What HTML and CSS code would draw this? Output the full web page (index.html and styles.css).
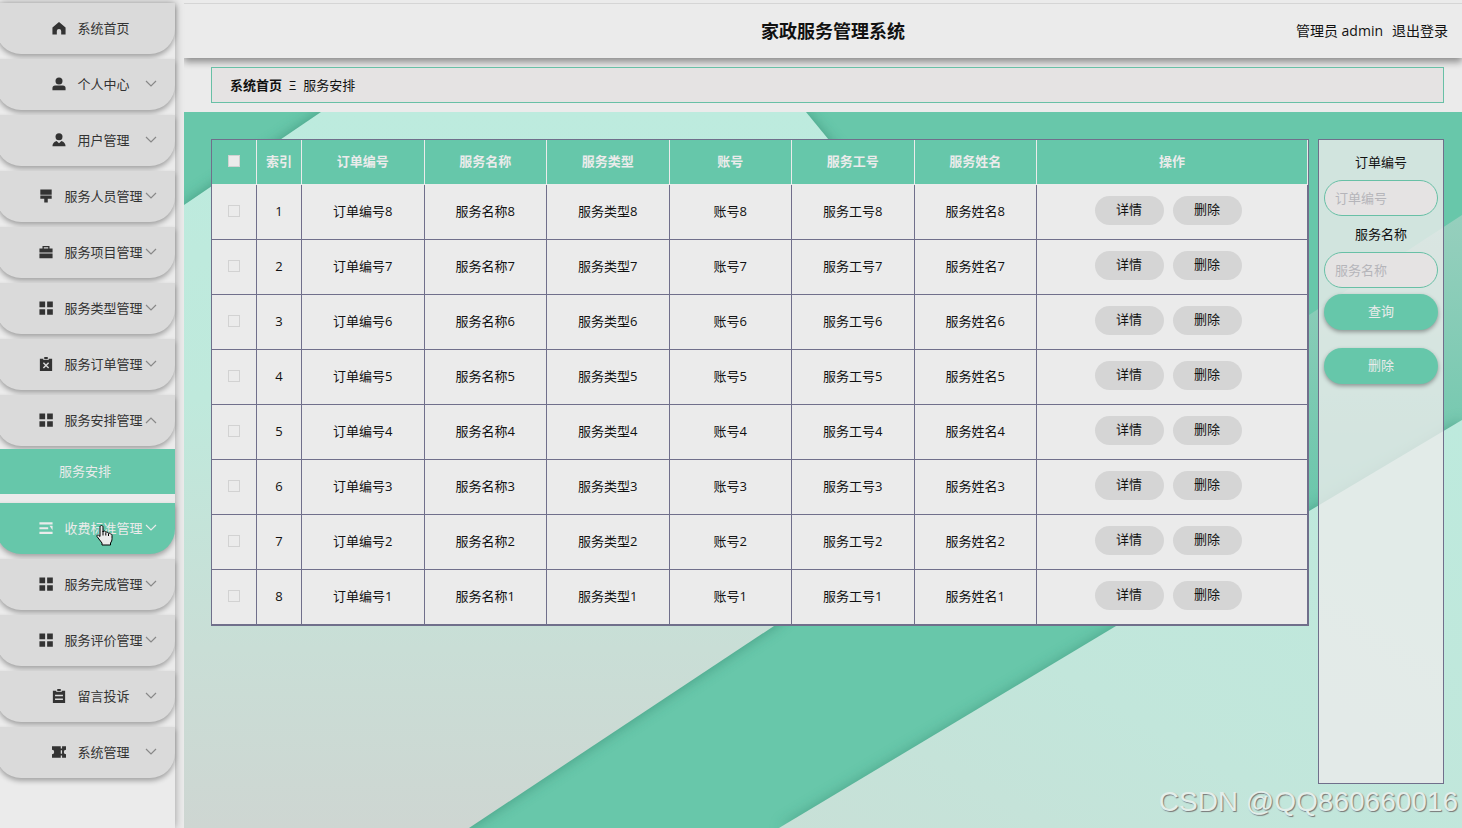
FILE: index.html
```html
<!DOCTYPE html>
<html lang="zh-CN">
<head>
  <meta charset="UTF-8" />
  <meta name="viewport" content="width=device-width, initial-scale=1">
  <title>家政服务管理系统</title>
  <link rel="stylesheet" href="styles.css">
</head>
<body>

  <!-- shared icons -->
  <svg class="sprite" aria-hidden="true">
    <symbol id="i-home" viewBox="0 0 16 16"><path d="M8 1L15.500 7.500v8h-5v-4a2.500 2.500 0 0 0-5 0v4h-5v-8z"/></symbol>
    <symbol id="i-user" viewBox="0 0 16 16"><circle cx="8" cy="4.500" r="4"/><path d="M.5 15V12.500c0-1.800 1.200-2.800 3-2.800h9c1.800 0 3 1 3 2.800V15z"/></symbol>
    <symbol id="i-admin" viewBox="0 0 16 16"><circle cx="8" cy="4.300" r="4"/><path d="M.5 15c0-3 1.700-5.200 4.800-6L8 11.800 10.700 9c3.100.8 4.800 3 4.800 6z"/></symbol>
    <symbol id="i-brush" viewBox="0 0 16 16"><path d="M1.500.5h13v6h-13zM1.500 7.500h13V11H10v4.500H6V11H1.500z"/></symbol>
    <symbol id="i-case" viewBox="0 0 16 16"><path d="M4 4V1h8v3h3.500v4.500H.5V4zM5.500 4h5V2.500h-5zM.5 9.700h15V15H.5z" fill-rule="evenodd"/></symbol>
    <symbol id="i-grid" viewBox="0 0 16 16"><path d="M.5.5h6.500v6.500H.5zM9.300.5h6.500v6.500H9.300zM.5 9.300h6.500v6.500H.5zM9.300 9.300h6.500v6.500H9.300z"/></symbol>
    <symbol id="i-close" viewBox="0 0 16 16"><path d="M1 2h4v1.500h6V2h4v14H1zM6 0h4v2.500H6z"/><path d="M5 6.500l6 6m0-6l-6 6" fill="none" stroke="#dadada" stroke-width="1.700"/></symbol>
    <symbol id="i-lines" viewBox="0 0 16 16"><path d="M.5 1.500h15V4H.5zM.5 7h10v2.300H.5zM.5 12.300h15v2.500H.5zM12 5.500h3.500v5z"/></symbol>
    <symbol id="i-note" viewBox="0 0 16 16"><path d="M1 2h4v1.500h6V2h4v14H1zM6 0h4v2.500H6z"/><path d="M3.500 7.500h9M3.500 11.800h9" fill="none" stroke="#dadada" stroke-width="1.700"/></symbol>
    <symbol id="i-ticket" viewBox="0 0 16 16"><path d="M0 1.500h10v2.500h1.500V1.500H16v4a2.500 2.500 0 0 0 0 5v4h-4.500V12H10v2.500H0v-4a2.500 2.500 0 0 0 0-5zM10 6v4h1.500V6z" fill-rule="evenodd"/></symbol>
    <symbol id="i-arrow" viewBox="0 0 12 12"><path d="M1 3l5 5 5-5" fill="none" stroke="currentColor" stroke-width="1.200"/></symbol>
  </svg>

  <div class="app">
    <nav class="sidebar">
      <a href="#" class="item"><svg class="icon"><use href="#i-home"/></svg><span>系统首页</span></a>
      <a href="#" class="item"><svg class="icon"><use href="#i-user"/></svg><span>个人中心</span><svg class="arrow"><use href="#i-arrow"/></svg></a>
      <a href="#" class="item"><svg class="icon"><use href="#i-admin"/></svg><span>用户管理</span><svg class="arrow"><use href="#i-arrow"/></svg></a>
      <a href="#" class="item"><svg class="icon"><use href="#i-brush"/></svg><span>服务人员管理</span><svg class="arrow"><use href="#i-arrow"/></svg></a>
      <a href="#" class="item"><svg class="icon"><use href="#i-case"/></svg><span>服务项目管理</span><svg class="arrow"><use href="#i-arrow"/></svg></a>
      <a href="#" class="item"><svg class="icon"><use href="#i-grid"/></svg><span>服务类型管理</span><svg class="arrow"><use href="#i-arrow"/></svg></a>
      <a href="#" class="item"><svg class="icon"><use href="#i-close"/></svg><span>服务订单管理</span><svg class="arrow"><use href="#i-arrow"/></svg></a>
      <a href="#" class="item open"><svg class="icon"><use href="#i-grid"/></svg><span>服务安排管理</span><svg class="arrow"><use href="#i-arrow"/></svg></a>
      <a href="#" class="subitem">服务安排</a>
      <a href="#" class="item active"><svg class="icon"><use href="#i-lines"/></svg><span>收费标准管理</span><svg class="arrow"><use href="#i-arrow"/></svg>
        <svg class="pointer" viewBox="0 0 17 22"><path d="M5.500 1.500c1 0 1.500.7 1.500 1.500v5l.5-.8c1-.4 2 0 2.300 1 1-.5 2 0 2.400 1 1-.4 1.800 0 2.300.8 1-.1 1.500.5 1.500 1.500v3c0 2-.5 3-1.500 4.500v2H6v-2L1 12.500c-.6-1 .6-2 1.600-1.300L4 12.500V3c0-.8.500-1.500 1.500-1.500z" fill="#ebebeb" stroke="#000"/><path d="M7 7v4.500M9.800 8.500v3M12.500 9.500v2.500" stroke="#000"/></svg>
      </a>
      <a href="#" class="item"><svg class="icon"><use href="#i-grid"/></svg><span>服务完成管理</span><svg class="arrow"><use href="#i-arrow"/></svg></a>
      <a href="#" class="item"><svg class="icon"><use href="#i-grid"/></svg><span>服务评价管理</span><svg class="arrow"><use href="#i-arrow"/></svg></a>
      <a href="#" class="item"><svg class="icon"><use href="#i-note"/></svg><span>留言投诉</span><svg class="arrow"><use href="#i-arrow"/></svg></a>
      <a href="#" class="item"><svg class="icon"><use href="#i-ticket"/></svg><span>系统管理</span><svg class="arrow"><use href="#i-arrow"/></svg></a>
    </nav>

    <div class="main">
      <header class="header">
        <h1>家政服务管理系统</h1>
        <div class="account">
          <span>管理员 admin</span>
          <a href="#">退出登录</a>
        </div>
      </header>

      <div class="breadcrumb">
        <a href="#">系统首页</a>
        <span>Ξ</span>
        <span>服务安排</span>
      </div>

      <div class="content">
        <svg class="backdrop" viewBox="0 0 1278 716" preserveAspectRatio="none" aria-hidden="true">
          <defs>
            <linearGradient id="left" x1="0" y1="0" x2="0" y2="1">
              <stop offset="0" stop-color="#bdebde"/>
              <stop offset=".4" stop-color="#bfe9dc"/>
              <stop offset=".75" stop-color="#c9ded6"/>
              <stop offset="1" stop-color="#ced6d2"/>
            </linearGradient>
            <linearGradient id="right" x1="1" y1="0" x2="0" y2="1">
              <stop offset="0" stop-color="#bdeadd"/>
              <stop offset=".6" stop-color="#c2e6db"/>
              <stop offset="1" stop-color="#c8e0d7"/>
            </linearGradient>
            <linearGradient id="band" x1="0" y1="0" x2="0" y2="1">
              <stop offset="0" stop-color="#96cfbd"/>
              <stop offset="1" stop-color="#68c6aa"/>
            </linearGradient>
            <filter id="soft" x="-10%" y="-10%" width="120%" height="120%"><feGaussianBlur stdDeviation="7"/></filter>
          </defs>
          <rect width="1278" height="716" fill="#68c7aa"/>
          <path d="M137 0H622L860 290L590 514L285 716H0V93z" fill="#2f7f67" opacity=".6" filter="url(#soft)"/>
          <path d="M137 0H622L860 290L590 514L285 716H0V93z" fill="url(#left)"/>
          <path d="M1278 103L1125 203V420L1278 318z" fill="url(#band)"/>
          <path d="M1278 308L932 514L595 716H1278z" fill="#2f7f67" opacity=".5" filter="url(#soft)"/>
          <path d="M1278 308L932 514L595 716H1278z" fill="url(#right)"/>
        </svg>

        <table class="list">
          <thead>
            <tr>
              <th class="narrow"><input type="checkbox" aria-label="全选"></th>
              <th class="narrow">索引</th>
              <th>订单编号</th>
              <th>服务名称</th>
              <th>服务类型</th>
              <th>账号</th>
              <th>服务工号</th>
              <th>服务姓名</th>
              <th class="wide">操作</th>
            </tr>
          </thead>
          <tbody id="rows"></tbody>
        </table>

        <form class="search">
          <label for="orderNo">订单编号</label>
          <input type="text" id="orderNo" placeholder="订单编号">
          <label for="serviceName">服务名称</label>
          <input type="text" id="serviceName" placeholder="服务名称">
          <button type="button">查询</button>
          <button type="button">删除</button>
        </form>
      </div>
    </div>
  </div>

  <div class="watermark">CSDN @QQ860660016</div>

  <script>
    const rows = document.getElementById("rows");
    const fields = ["订单编号", "服务名称", "服务类型", "账号", "服务工号", "服务姓名"];

    for (let i = 1; i <= 8; i++) {
      const n = 9 - i;
      const cells = fields.map(name => `<td>${name}${n}</td>`).join("");
      rows.innerHTML += `<tr>
        <td><input type="checkbox" aria-label="选择第${i}行"></td>
        <td>${i}</td>${cells}
        <td><div class="actions"><button type="button">详情</button><button type="button">删除</button></div></td>
      </tr>`;
    }
  </script>

</body>
</html>
```
FILE: styles.css
```css
* {
  box-sizing: border-box;
}

body {
  margin: 0;
  background: #ebebeb;
  color: #111;
  font-family: 'Open Sans', 'Noto Sans CJK SC', sans-serif;
  font-size: 13px;
  line-height: 20px;
}

a {
  color: inherit;
  text-decoration: none;
}

button, input {
  font: inherit;
}

.sprite {
  display: none;
}

.app {
  display: flex;
  gap: 9px;
  min-height: 100vh;
  padding-top: 3px;
  overflow: hidden;
}

/* sidebar */
.sidebar {
  flex: 0 0 175px;
  box-shadow: 0 0 8px rgba(0, 0, 0, 0.35);
}

.item {
  position: relative;
  display: flex;
  align-items: center;
  justify-content: center;
  gap: 11px;
  height: 51px;
  margin-bottom: 5px;
  margin-left: -4px;
  padding: 0 14px 1px 25px;
  background: #dadada;
  color: #333;
  border-radius: 0 0 25px 25px;
  box-shadow: 0 3px 5px rgba(0, 0, 0, 0.3);
}

.item .icon {
  width: 14px;
  height: 14px;
  fill: currentColor;
}

.item .arrow {
  position: absolute;
  right: 18px;
  width: 12px;
  height: 12px;
  color: #888;
}

.item.open {
  margin-bottom: 3px;
}

.item.open .arrow {
  transform: rotate(180deg);
}

.item.active,
.subitem {
  background: #66c7aa;
  color: #ebebeb;
}

.item.active .arrow {
  color: #ebebeb;
}

.subitem {
  position: relative;
  display: block;
  padding-right: 5px;
  margin-bottom: 9px;
  line-height: 45px;
  text-align: center;
}

.pointer {
  position: absolute;
  left: 100px;
  top: 21px;
  width: 17px;
  height: 22px;
}

/* main area */
.main {
  flex: 1;
  min-width: 0;
  display: flex;
  flex-direction: column;
  overflow: hidden;
}

.header {
  display: grid;
  grid-template-columns: 1fr auto 1fr;
  align-items: center;
  height: 55px;
  padding: 0 14px;
  border-top: 1px solid #d5d5d5;
  box-shadow: 0 4px 7px rgba(0, 0, 0, 0.4);
}

.header h1 {
  grid-column: 2;
  margin: 0 0 0 20px;
  font-size: 18px;
}

.account {
  display: flex;
  justify-content: flex-end;
  gap: 9px;
  font-size: 14px;
}

.breadcrumb {
  display: flex;
  align-items: center;
  gap: 7px;
  height: 36px;
  margin: 9px 18px 9px 27px;
  padding: 0 18px;
  background: #e5e3e3;
  border: 1px solid #68c0a6;
}

.breadcrumb a {
  font-weight: bold;
}

.content {
  position: relative;
  flex: 1;
  display: flex;
  align-items: flex-start;
  gap: 9px;
  padding: 27px 18px 44px 27px;
}

.backdrop {
  position: absolute;
  inset: 0;
  width: 100%;
  height: 100%;
}

/* table */
.list {
  position: relative;
  flex: 1;
  width: 100%;
  min-width: 0;
  table-layout: fixed;
  border-spacing: 0;
  background: #ebebeb;
  border: 1px solid #706f8b;
  text-align: center;
}

.list th,
.list td {
  padding: 0 0 2px;
  border-right: 1px solid #706f8b;
}

.list th {
  height: 45px;
  background: #66c7aa;
  border-color: #ebebeb;
  border-bottom: 1px solid #ebebeb;
  color: #ebebeb;
}

.list td {
  height: 55px;
  border-bottom: 1px solid #706f8b;
}

.list .narrow {
  width: 45px;
}

.list .wide {
  width: 271px;
}

.list input {
  appearance: none;
  display: block;
  width: 12px;
  height: 12px;
  margin: 0 auto;
  background: #ebebeb;
  border: 1px solid #d2d2d2;
}

.actions {
  display: flex;
  justify-content: center;
  gap: 9px;
  padding: 0 8px 2px 0;
}

.actions button {
  width: 69px;
  height: 29px;
  padding: 0 0 2px;
  background: #d5d5d5;
  border: none;
  border-radius: 15px;
  color: #111;
  cursor: pointer;
}

/* search panel */
.search {
  position: relative;
  align-self: stretch;
  flex: 0 0 126px;
  display: flex;
  flex-direction: column;
  padding: 4px 5px;
  background: rgba(235, 235, 235, 0.8);
  border: 1px solid #706f8b;
  text-align: center;
}

.search label {
  line-height: 36px;
}

.search input {
  width: 100%;
  height: 36px;
  padding: 0 10px;
  background: #e5e3e3;
  border: 1px solid #68c0a6;
  border-radius: 18px;
}

.search input::placeholder {
  color: #b5b5ba;
}

.search button {
  height: 36px;
  margin: 6px 0 12px;
  padding: 0 0 2px;
  background: #66c7aa;
  border: none;
  border-radius: 18px;
  box-shadow: 0 2px 4px rgba(0, 0, 0, 0.35);
  color: #ebebeb;
  cursor: pointer;
}

.watermark {
  position: absolute;
  right: 4px;
  bottom: 8px;
  color: #e3eeea;
  font-family: 'Liberation Sans', sans-serif;
  font-size: 28px;
  line-height: 36px;
  text-shadow: 1px 1px 1px #777;
}
```
